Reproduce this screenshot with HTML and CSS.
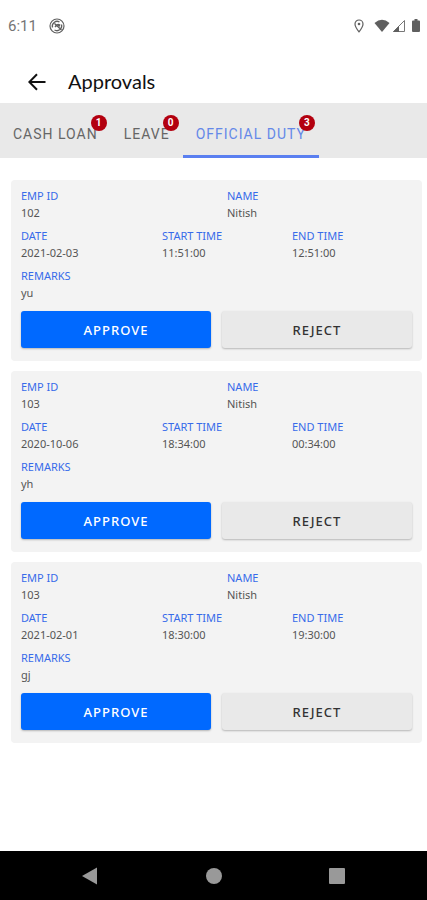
FILE: index.html
```html
<!DOCTYPE html>
<html lang="en">
<head>
<meta charset="utf-8">
<meta name="viewport" content="width=device-width, initial-scale=1">
<title>Approvals</title>
<link rel="stylesheet" href="styles.css">
</head>
<body>
<div class="status">
  <span class="clock">6:11</span>
  <svg class="status-app" width="16" height="16" viewBox="0 0 16 16" fill="none" stroke="#5f5f5f"><circle cx="8" cy="8" r="7" stroke-width="1.2"/><path d="M3.5 9.500A4.800 4.800 0 0 1 10.500 4M12.500 6.500A4.800 4.800 0 0 1 5.500 12M5.500 5.500l7 6.500" stroke-width="1.300"/><path d="M5.500 8.500Q7.500 4.500 11.500 6.500L10.500 9 8.500 7.500 6.500 9.500z" fill="#5f5f5f" stroke="none"/></svg>
  <svg class="status-pin" width="10" height="14" viewBox="0 0 10 14" fill="none" stroke="#5f5f5f"><path d="M5 12.8C2.2 9.300 1 7 1 5a4 4 0 0 1 8 0c0 2-1.200 4.300-4 7.800z" stroke-width="1.200"/><circle cx="5" cy="5" r="1.300" fill="#5f5f5f" stroke="none"/></svg>
  <svg class="status-wifi" width="16" height="14" viewBox="0 0 16 14"><path d="M.5 4Q8-2.500 15.500 4L8 13z" fill="#5f5f5f"/></svg>
  <svg class="status-signal" width="14" height="14" viewBox="0 0 14 14"><path d="M1.500 12.500H12.500V1.500z" fill="none" stroke="#777"/><path d="M1 13H7V7z" fill="#5f5f5f"/></svg>
  <svg class="status-battery" width="8" height="14" viewBox="0 0 8 14"><path d="M2.500 0h3v1.500H7a1 1 0 0 1 1 1V12a1 1 0 0 1-1 1H1a1 1 0 0 1-1-1V2.500a1 1 0 0 1 1-1h1.500z" fill="#5f5f5f"/></svg>
</div>
<header class="header">
  <button class="back" type="button" aria-label="Back"><svg width="18" height="18" viewBox="0 0 18 18" fill="none" stroke="#111" stroke-width="2"><path d="M17.500 9H1.500M9 1.200 1.300 9 9 16.800"/></svg></button>
  <h1>Approvals</h1>
</header>
<nav class="tabs">
  <a class="tab" href="#cash">CASH LOAN<span class="badge">1</span></a>
  <a class="tab" href="#leave">LEAVE<span class="badge">0</span></a>
  <a class="tab active" href="#duty">OFFICIAL DUTY<span class="badge">3</span></a>
</nav>
<main class="cards">
  <article class="card">
    <dl class="row two"><div><dt>EMP ID</dt><dd>102</dd></div><div><dt>NAME</dt><dd>Nitish</dd></div></dl>
    <dl class="row three"><div><dt>DATE</dt><dd>2021-02-03</dd></div><div><dt>START TIME</dt><dd>11:51:00</dd></div><div><dt>END TIME</dt><dd>12:51:00</dd></div></dl>
    <dl class="row"><div><dt>REMARKS</dt><dd>yu</dd></div></dl>
    <div class="actions"><button class="btn approve" type="button">APPROVE</button><button class="btn reject" type="button">REJECT</button></div>
  </article>
  <article class="card">
    <dl class="row two"><div><dt>EMP ID</dt><dd>103</dd></div><div><dt>NAME</dt><dd>Nitish</dd></div></dl>
    <dl class="row three"><div><dt>DATE</dt><dd>2020-10-06</dd></div><div><dt>START TIME</dt><dd>18:34:00</dd></div><div><dt>END TIME</dt><dd>00:34:00</dd></div></dl>
    <dl class="row"><div><dt>REMARKS</dt><dd>yh</dd></div></dl>
    <div class="actions"><button class="btn approve" type="button">APPROVE</button><button class="btn reject" type="button">REJECT</button></div>
  </article>
  <article class="card">
    <dl class="row two"><div><dt>EMP ID</dt><dd>103</dd></div><div><dt>NAME</dt><dd>Nitish</dd></div></dl>
    <dl class="row three"><div><dt>DATE</dt><dd>2021-02-01</dd></div><div><dt>START TIME</dt><dd>18:30:00</dd></div><div><dt>END TIME</dt><dd>19:30:00</dd></div></dl>
    <dl class="row"><div><dt>REMARKS</dt><dd>gj</dd></div></dl>
    <div class="actions"><button class="btn approve" type="button">APPROVE</button><button class="btn reject" type="button">REJECT</button></div>
  </article>
</main>
<footer class="sysnav">
  <button type="button" aria-label="Back"><svg width="18" height="18" viewBox="0 0 18 18"><path d="M1 9 16 .5v17z" fill="#999"/></svg></button>
  <button type="button" aria-label="Home"><svg width="18" height="18" viewBox="0 0 18 18"><circle cx="9" cy="9" r="8" fill="#999"/></svg></button>
  <button type="button" aria-label="Recent apps"><svg width="18" height="18" viewBox="0 0 18 18"><rect x="1" y="1" width="16" height="16" rx="1" fill="#999"/></svg></button>
</footer>
</body>
</html>
```
FILE: styles.css
```css
* { box-sizing: border-box; }
body {
  margin: 0;
  min-height: 100vh;
  display: flex;
  flex-direction: column;
  background: #fff;
  font-family: "Noto Sans", sans-serif;
}
button { border: 0; padding: 0; background: none; font-family: inherit; cursor: pointer; }
svg { display: block; }

.status {
  display: flex;
  align-items: center;
  height: 52px;
  padding: 0 7px 0 8px;
}
.clock { font: 15px/20px Roboto, sans-serif; color: #757575; }
.status-app { margin-left: 12px; }
.status-pin { margin-left: auto; }
.status-wifi { margin-left: 10px; }
.status-signal { margin-left: 2px; }
.status-battery { margin-left: 6px; }

.header {
  display: flex;
  align-items: center;
  gap: 22px;
  height: 51px;
  padding: 8px 28px 0;
}
.header h1 {
  margin: 0;
  padding-bottom: 2px;
  font: 20px/24px Lato, sans-serif;
  color: #111;
}

.tabs {
  display: flex;
  height: 55px;
  background: #e9e9e9;
}
.tab {
  position: relative;
  padding: 8px 13px 0;
  border-bottom: 3px solid transparent;
  font-family: Roboto, sans-serif;
  font-size: 14px;
  line-height: 46px;
  letter-spacing: 1px;
  color: #666;
  text-decoration: none;
  white-space: nowrap;
}
.tab.active { color: #6488e8; border-color: #5a7ff0; }
.badge {
  position: absolute;
  top: 12px;
  right: 4px;
  width: 16px;
  height: 16px;
  border-radius: 50%;
  background: #b3000f;
  color: #fff;
  font-size: 10px;
  font-weight: 700;
  line-height: 16px;
  letter-spacing: 0;
  text-align: center;
}

.cards {
  flex: 1;
  display: flex;
  flex-direction: column;
  gap: 10px;
  padding: 22px 5px 22px 11px;
}
.card {
  padding: 8px 10px 13px;
  border-radius: 4px;
  background: #f3f3f3;
}
.row { display: grid; margin: 0 0 7px; }
.two { grid-template-columns: 206fr 185fr; }
.three { grid-template-columns: 141fr 130fr 120fr; }
dt { font-size: 11px; line-height: 16px; color: #376bea; }
dd { margin: 0; font-size: 11px; line-height: 17px; color: #555; }

.actions {
  display: grid;
  grid-template-columns: 1fr 1fr;
  gap: 11px;
  margin-top: 10px;
}
.btn {
  height: 37px;
  border-radius: 3px;
  font-size: 13px;
  font-weight: 500;
  letter-spacing: 1px;
  box-shadow: 0 1px 2px rgba(0, 0, 0, 0.25);
}
.approve { background: #0069ff; color: #fff; }
.reject { background: #e9e9e9; color: #333; }

.sysnav {
  display: flex;
  justify-content: space-between;
  align-items: center;
  height: 49px;
  padding: 0 81px;
  background: #000;
}
```
